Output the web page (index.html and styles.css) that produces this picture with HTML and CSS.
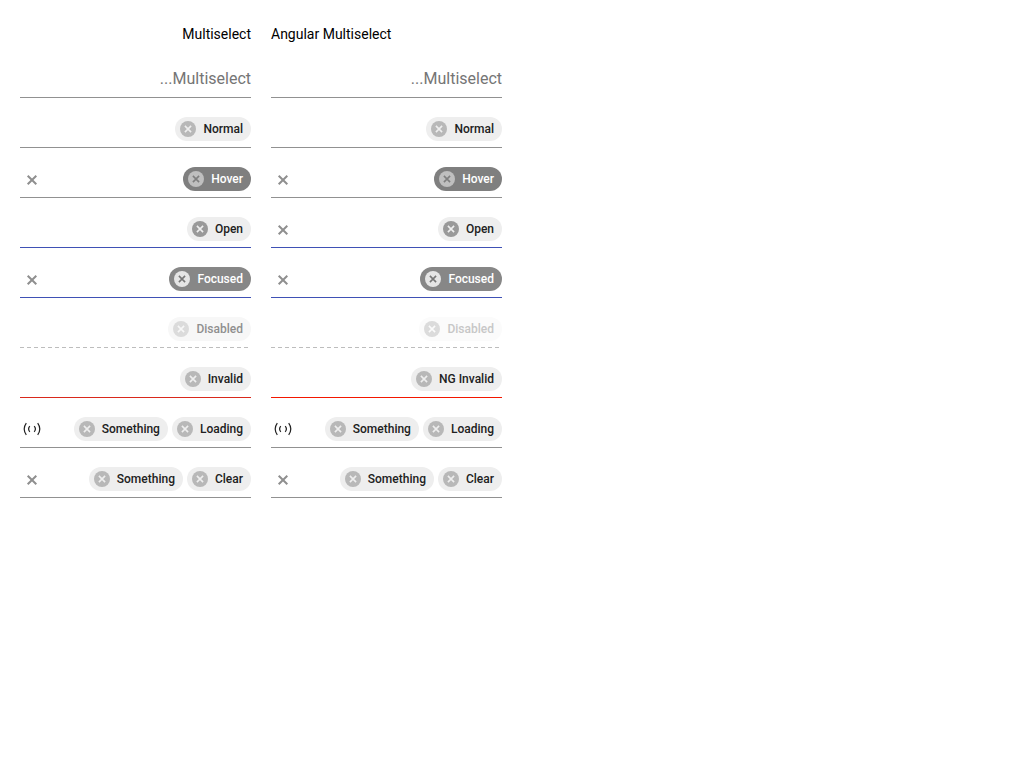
FILE: index.html
```html
<!DOCTYPE html>
<html lang="en">
<head>
<meta charset="utf-8">
<title>Multiselect</title>
<link rel="stylesheet" href="styles.css">
<script src="app.js" defer></script>
</head>
<body>
<svg class="defs" aria-hidden="true">
  <symbol id="remove" viewBox="0 0 16 16"><circle cx="8" cy="8" r="8" fill="currentColor"/><path class="cross" d="M4.9 4.9l6.2 6.2M11.1 4.9l-6.2 6.2"/></symbol>
  <symbol id="clear" viewBox="0 0 16 16"><path d="M3.7 3.7l8.6 8.6M12.3 3.7l-8.6 8.6" fill="none" stroke="currentColor" stroke-width="2"/></symbol>
  <symbol id="loading" viewBox="0 0 18 14"><path d="M3.3 1.2Q-.9 7 3.3 12.8M14.7 1.2Q18.9 7 14.7 12.8M6.8 4.2Q4.4 7 6.8 9.8M11.2 4.2Q13.6 7 11.2 9.8" fill="none" stroke="currentColor" stroke-width="1.2"/></symbol>
</svg>
<main class="grid" id="grid">
  <h2 class="title title-end">Multiselect</h2>
  <h2 class="title">Angular Multiselect</h2>
</main>
</body>
</html>
```
FILE: styles.css
```css
body { margin: 0; background: #fff; font: 14px/28px Roboto, sans-serif; color: #000; }
.defs { position: absolute; width: 0; height: 0; }
.grid { display: grid; grid-template-columns: 231px 231px; column-gap: 20px; padding: 20px; }
.title { margin: 0; height: 28px; font-size: 14px; font-weight: 400; }
.title-end { text-align: right; }
.select { display: flex; align-items: flex-end; box-sizing: border-box; height: 50px; padding-bottom: 6px; border-bottom: 1px solid #919191; }
.placeholder { margin-left: auto; font-size: 16px; line-height: 24px; color: #757575; padding-bottom: -1px; }
.chips { display: flex; gap: 4px; margin-left: auto; }
.chip { display: flex; align-items: center; box-sizing: border-box; height: 24px; padding: 0 8px 0 5px; border-radius: 12px; background: #eee; color: #212121; font-size: 12px; font-weight: 500; line-height: 24px; }
.remove { width: 16px; height: 16px; margin-right: 7px; color: #b8b8b8; }
.cross { fill: none; stroke: var(--cross, #eee); stroke-width: 1.6; }
.icon { width: 16px; height: 16px; margin: 0 0 3px 4px; color: #8f8f8f; }
.loading { width: 18px; height: 14px; margin: 0 0 5px 3px; color: #212121; }
.hover .chip { background: #7f7f7f; color: #fff; }
.hover .remove { color: #bfbfbf; --cross: #7f7f7f; }
.open, .focused { border-bottom-color: #3f51b5; }
.open .remove { color: #999; }
.focused .chip { background: #878787; color: #fff; }
.focused .remove { color: #e5e5e5; --cross: #777; }
.disabled { border-bottom: 0; padding-bottom: 7px; background: repeating-linear-gradient(90deg, #bdbdbd 0 4px, transparent 4px 7px) bottom / 100% 1px no-repeat; }
.disabled .chip { background: #f7f7f7; color: #8f8f8f; }
.disabled .remove { color: #dbdbdb; --cross: #f7f7f7; }
.faded .chip { background: #fbfbfb; color: #c7c7c7; }
.faded .remove { color: #dbdbdb; --cross: #fbfbfb; }
.invalid { border-bottom-color: #d9291c; }
.ng { border-bottom-color: #f31700; }
```
FILE: app.js
```js
const rows = [
  ['', 'placeholder'],
  ['', ['Normal']],
  ['hover', ['Hover'], 'clear', 'clear'],
  ['open', ['Open'], '', 'clear'],
  ['focused', ['Focused'], 'clear', 'clear'],
  ['disabled', ['Disabled']],
  ['invalid', ['Invalid']],
  ['', ['Something', 'Loading'], 'loading', 'loading'],
  ['', ['Something', 'Clear'], 'clear', 'clear']
];
const extra = { disabled: ' faded', invalid: ' ng' };
const icon = name => name ? `<svg class="${name === 'loading' ? 'loading' : 'icon'}"><use href="#${name}"/></svg>` : '';
const chip = text => `<span class="chip"><svg class="remove"><use href="#remove"/></svg>${text}</span>`;
const select = (state, items, iconName, angular) => {
  const body = items === 'placeholder'
    ? '<span class="placeholder">...Multiselect</span>'
    : `<span class="chips">${items.map(t => chip(angular && t === 'Invalid' ? 'NG Invalid' : t)).join('')}</span>`;
  return `<div class="select ${state}${angular && extra[state] || ''}">${icon(iconName)}${body}</div>`;
};
document.getElementById('grid').insertAdjacentHTML('beforeend', rows.map(
  ([state, items, left, right]) => select(state, items, left, false) + select(state, items, right, true)
).join(''));
```
